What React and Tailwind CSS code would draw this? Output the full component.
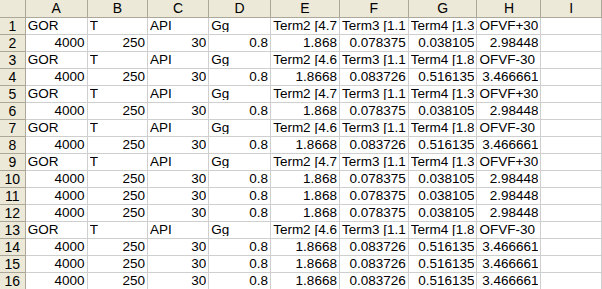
import React from "react";

const cols = ["A", "B", "C", "D", "E", "F", "G", "H", "I"];

const head = ["GOR", "T", "API", "Gg"];
const labelsPlus = [...head, "Term2 [4.7", "Term3 [1.1", "Term4 [1.3", "OFVF+30"];
const labelsMinus = [...head, "Term2 [4.6", "Term3 [1.1", "Term4 [1.8", "OFVF-30"];
const valsPlus = ["4000", "250", "30", "0.8", "1.868", "0.078375", "0.038105", "2.98448"];
const valsMinus = ["4000", "250", "30", "0.8", "1.8668", "0.083726", "0.516135", "3.466661"];

const rows = [
  labelsPlus,
  valsPlus,
  labelsMinus,
  valsMinus,
  labelsPlus,
  valsPlus,
  labelsMinus,
  valsMinus,
  labelsPlus,
  valsPlus,
  valsPlus,
  valsPlus,
  labelsMinus,
  valsMinus,
  valsMinus,
  valsMinus,
];

const isNum = (v) => /^-?[\d.]+$/.test(v);

export default function App() {
  return (
    <div
      className="w-[602px] h-[289px] overflow-hidden bg-white text-black"
      style={{ fontFamily: '"Liberation Sans", Arial, sans-serif' }}
    >
      <table className="border-collapse table-fixed text-[13.5px] leading-none">
        <colgroup>
          <col className="w-[26px]" />
          <col className="w-[64px]" />
          <col className="w-[63px]" />
          <col className="w-[64px]" />
          <col className="w-[65px]" />
          <col className="w-[63px]" />
          <col className="w-[65px]" />
          <col className="w-[63px]" />
          <col className="w-[64px]" />
          <col className="w-[65px]" />
        </colgroup>
        <thead>
          <tr className="h-[17px]">
            <th className="bg-[#ece9d8] border-r border-b border-[#aca899] p-0"></th>
            {cols.map((c) => (
              <th
                key={c}
                className="bg-[#ece9d8] border-r border-b border-[#aca899] p-0 font-normal text-center h-[17px] text-[14px]"
              >
                {c}
              </th>
            ))}
          </tr>
        </thead>
        <tbody>
          {rows.map((r, i) => (
            <tr key={i} className="h-[17px]">
              <td className="bg-[#ece9d8] border-r border-b border-[#aca899] p-0 text-center h-[17px] text-[14px]">
                {i + 1}
              </td>
              {cols.map((c, j) => {
                const v = r[j] ?? "";
                return (
                  <td
                    key={c}
                    className={
                      "border-r border-b border-[#cfcfcf] p-0 px-[2px] h-[17px] overflow-hidden whitespace-nowrap " +
                      (isNum(v) ? "text-right" : "text-left")
                    }
                  >
                    <div className="overflow-hidden whitespace-nowrap">{v}</div>
                  </td>
                );
              })}
            </tr>
          ))}
        </tbody>
      </table>
    </div>
  );
}
